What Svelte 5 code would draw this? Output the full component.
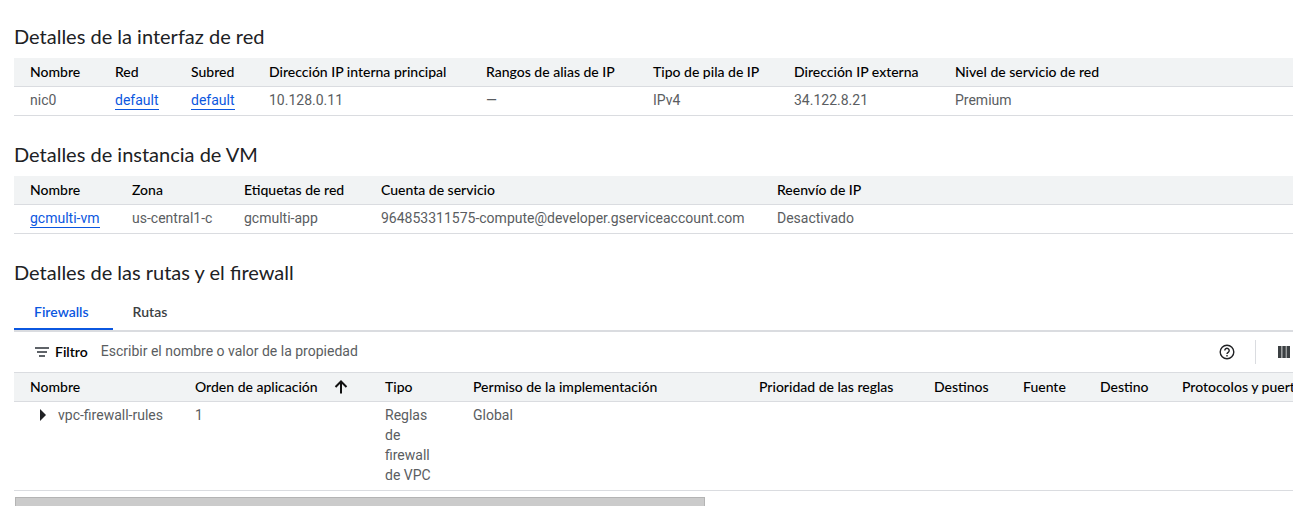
<script>
  let tab = $state('firewalls');
  let filter = $state('');

  const nic = [
    { label: 'Nombre', width: 85, value: 'nic0' },
    { label: 'Red', width: 76, value: 'default', link: true },
    { label: 'Subred', width: 78, value: 'default', link: true },
    { label: 'Dirección IP interna principal', width: 217, value: '10.128.0.11' },
    { label: 'Rangos de alias de IP', width: 167, value: '—' },
    { label: 'Tipo de pila de IP', width: 141, value: 'IPv4' },
    { label: 'Dirección IP externa', width: 161, value: '34.122.8.21' },
    { label: 'Nivel de servicio de red', value: 'Premium' }
  ];

  const vm = [
    { label: 'Nombre', width: 102, value: 'gcmulti-vm', link: true },
    { label: 'Zona', width: 112, value: 'us-central1-c' },
    { label: 'Etiquetas de red', width: 137, value: 'gcmulti-app' },
    { label: 'Cuenta de servicio', width: 396, value: '964853311575-compute@developer.gserviceaccount.com' },
    { label: 'Reenvío de IP', value: 'Desactivado' }
  ];

  const rules = [
    { label: 'Nombre', width: 165, value: 'vpc-firewall-rules', expand: true },
    { label: 'Orden de aplicación', width: 190, value: '1', sorted: true },
    { label: 'Tipo', width: 88, value: 'Reglas de firewall de VPC', wrap: true },
    { label: 'Permiso de la implementación', width: 286, value: 'Global' },
    { label: 'Prioridad de las reglas', width: 175, value: '' },
    { label: 'Destinos', width: 89, value: '' },
    { label: 'Fuente', width: 77, value: '' },
    { label: 'Destino', width: 82, value: '' },
    { label: 'Protocolos y puertos', width: 180, value: '' }
  ];
</script>

{#snippet grid(cols, name)}
  <table aria-label={name} class:wide={cols === rules}>
    <colgroup>
      {#each cols as c}<col style={c.width ? `width: ${c.width}px` : ''} />{/each}
    </colgroup>
    <thead>
      <tr>
        {#each cols as c}
          <th scope="col" aria-sort={c.sorted ? 'ascending' : undefined}>
            <span class="head">
              {c.label}
              {#if c.sorted}
                <svg width="14" height="14" viewBox="0 0 14 14" aria-hidden="true">
                  <path d="M7 13.5V1.5M1.5 7 7 1.5 12.5 7" fill="none" stroke="#111" stroke-width="2" />
                </svg>
              {/if}
            </span>
          </th>
        {/each}
      </tr>
    </thead>
    <tbody>
      <tr>
        {#each cols as c}
          <td class:wrap={c.wrap}>
            {#if c.link}
              <a href="#top">{c.value}</a>
            {:else if c.expand}
              <span class="expand">
                <button type="button" aria-label="Expandir">
                  <svg width="6" height="12" viewBox="0 0 6 12" aria-hidden="true"><path d="M0 0 6 6 0 12z" fill="#202124" /></svg>
                </button>
                {c.value}
              </span>
            {:else}
              {c.value}
            {/if}
          </td>
        {/each}
      </tr>
    </tbody>
  </table>
{/snippet}

<main>
  <section>
    <h2>Detalles de la interfaz de red</h2>
    {@render grid(nic, 'Detalles de la interfaz de red')}
  </section>

  <section>
    <h2>Detalles de instancia de VM</h2>
    {@render grid(vm, 'Detalles de instancia de VM')}
  </section>

  <section>
    <h2>Detalles de las rutas y el firewall</h2>
    <div class="tabs" role="tablist">
      <button type="button" role="tab" aria-selected={tab === 'firewalls'} onclick={() => (tab = 'firewalls')}>Firewalls</button>
      <button type="button" role="tab" aria-selected={tab === 'rutas'} onclick={() => (tab = 'rutas')}>Rutas</button>
    </div>
    <div class="toolbar">
      <label for="filter">
        <svg width="14" height="10" viewBox="0 0 14 10" aria-hidden="true">
          <path d="M0 1h14M2 5h10M4 9h6" stroke="#5f6368" stroke-width="2" />
        </svg>
        Filtro
      </label>
      <input id="filter" type="text" placeholder="Escribir el nombre o valor de la propiedad" bind:value={filter} />
      <button type="button" class="icon" aria-label="Ayuda">
        <svg width="16" height="16" viewBox="0 0 16 16" fill="none" stroke="#202124" stroke-width="1.4" aria-hidden="true">
          <circle cx="8" cy="8" r="6.8" />
          <path d="M5.8 6.5a2.2 2.2 0 1 1 3.4 1.8C8.4 8.8 8 9.1 8 10" />
          <path d="M8 11v1.5" />
        </svg>
      </button>
      <span class="rule"></span>
      <button type="button" class="icon" aria-label="Columnas">
        <svg width="12" height="12" viewBox="0 0 12 12" fill="#3c4043" aria-hidden="true">
          <path d="M0 0h3.500v12H0zM4.300 0h3.500v12h-3.500zM8.500 0h3.500v12H8.500z" />
        </svg>
      </button>
    </div>
    <div class="scroller">
      {@render grid(rules, 'Reglas de firewall')}
    </div>
    <div class="track"><div class="thumb"></div></div>
  </section>
</main>

<style>
  :global(body) {
    margin: 0;
    background: #fff;
  }

  main {
    padding: 24px 0 0 14px;
    overflow: hidden;
    color: #5a5d61;
    font: 400 14px/20px Roboto, sans-serif;
  }

  section + section {
    margin-top: 26px;
  }

  h2 {
    margin: 0 0 10px;
    color: #202124;
    font: 400 20px/24px Lato, sans-serif;
  }

  table {
    width: 100%;
    table-layout: fixed;
    border-collapse: separate;
    border-spacing: 0;
  }

  table.wide {
    width: 1332px;
  }

  th,
  td {
    padding: 4px 16px;
    border-bottom: 1px solid #dadce0;
    text-align: left;
    vertical-align: top;
    white-space: nowrap;
  }

  th {
    background: #f1f3f4;
    color: #000;
    font: 500 14px/20px Lato, sans-serif;
  }

  td {
    padding: 3px 16px 5px;
  }

  td.wrap {
    white-space: normal;
  }

  .head {
    display: flex;
    align-items: center;
    gap: 16px;
  }

  a {
    display: inline-block;
    border-bottom: 1px solid #0b57e0;
    color: #0b57e0;
    line-height: 18px;
    text-decoration: none;
  }

  td:has(a) {
    padding-bottom: 0;
  }

  button {
    padding: 0;
    border: 0;
    background: none;
    cursor: pointer;
  }

  .tabs {
    display: flex;
    border-bottom: 2px solid #dadce0;
  }

  .tabs button {
    padding: 8px 24px 6px 20px;
    border-bottom: 2px solid transparent;
    color: #3c4043;
    font: 600 14px/20px Lato, sans-serif;
  }

  .tabs button[aria-selected='true'] {
    border-color: #0b57e0;
    color: #0b57e0;
  }

  .toolbar {
    display: flex;
    align-items: center;
    height: 40px;
    border-bottom: 1px solid #dadce0;
  }

  label {
    display: flex;
    align-items: center;
    gap: 6px;
    padding-left: 21px;
    color: #000;
    font: 600 14px/20px Lato, sans-serif;
  }

  input {
    flex: 1;
    min-width: 0;
    padding: 0 13px 2px;
    border: 0;
    outline: 0;
    color: #202124;
    font: 400 14px/20px Roboto, sans-serif;
  }

  input::placeholder {
    color: #5a5d61;
    opacity: 1;
  }

  .icon {
    display: flex;
  }

  .rule {
    width: 1px;
    height: 24px;
    margin: 0 22px 0 20px;
    background: #dadce0;
  }

  .icon:last-child {
    padding-right: 3px;
  }

  .scroller {
    overflow: hidden;
  }

  .expand {
    display: flex;
    align-items: center;
    gap: 12px;
    padding-left: 10px;
  }

  .expand button {
    display: flex;
  }

  .track {
    padding: 6px 1px 0;
  }

  .thumb {
    box-sizing: border-box;
    width: 54%;
    height: 9px;
    border: 1px solid #b4b4b4;
    border-bottom: 0;
    background: #cbcbcb;
  }
</style>
